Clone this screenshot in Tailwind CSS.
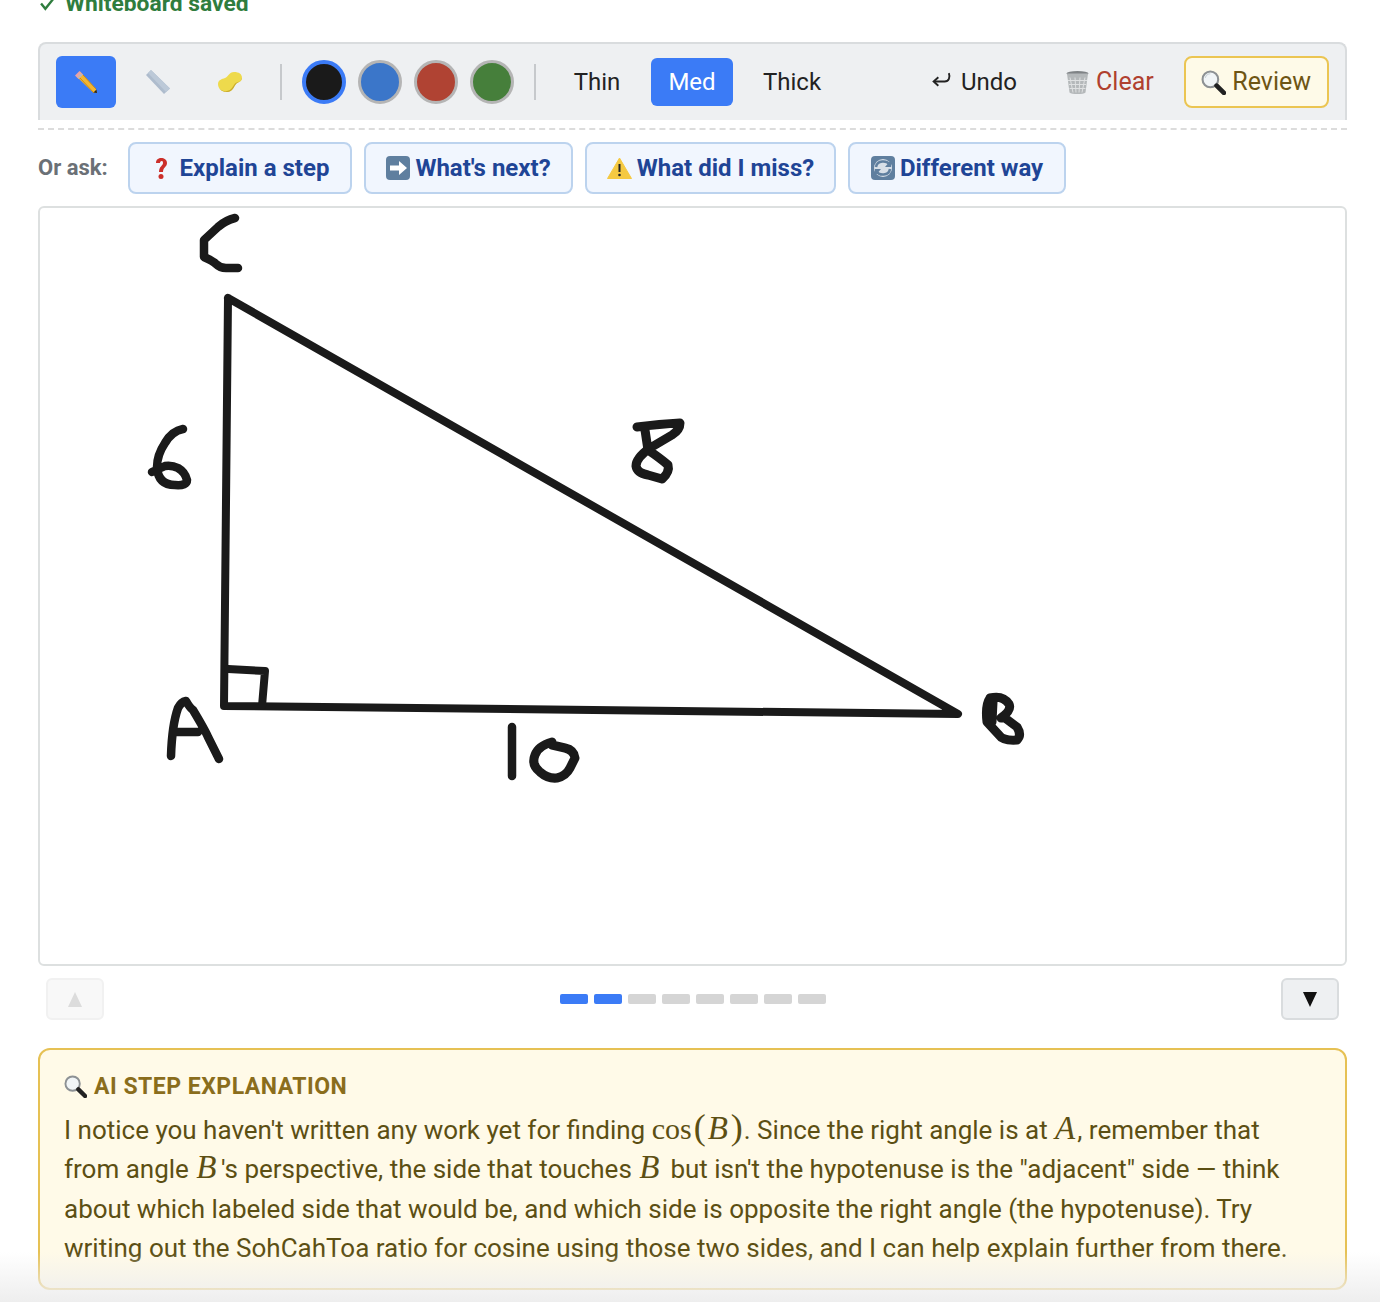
<!DOCTYPE html>
<html lang="en">
<head>
<meta charset="utf-8">
<title>Whiteboard</title>
<script src="https://cdn.jsdelivr.net/npm/@tailwindcss/browser@4"></script>
</head>
<body class="bg-white font-['Roboto',sans-serif] overflow-hidden">
<div class="relative w-[1380px] h-[1302px] overflow-hidden px-[38px]">
  <div class="h-[42px] flex items-start">
    <div class="flex items-center gap-[10px] -mt-[8px] h-[24px] pl-[2px] text-[#2f7d3e] text-[22.800px] font-bold leading-none">
      <svg width="15" height="13" viewBox="0 0 14 12" fill="none" stroke="#2f7d3e" stroke-width="2.200"><path d="M1 5l4 5 8-10"/></svg>
      <span>Whiteboard saved</span>
    </div>
  </div>

  <div class="w-[1309px] h-[78px] bg-[#eef0f2] border-2 border-b-0 border-[#d9dcde] rounded-t-[8px] flex items-center pl-[16px] pr-[16px] text-[24px] text-[#222]">
    <button class="w-[60px] h-[52px] rounded-[6px] bg-[#3b7bf6] flex items-center justify-center">
      <svg width="24" height="24" viewBox="0 0 24 24"><path d="M2 6l4-4.500 16 17.500 1 4-4.500-1z" fill="#f2b632"/><path d="M6 8l14 15M9 5l13 14" stroke="#c98a1c" stroke-width="1"/><path d="M1 5.500L5.500 1l3.500 3.500-4.500 4.500z" fill="#e8a2a6"/><path d="M3.500 7L7 3.500l1.500 1.500L5 8.500z" fill="#b9b9b9"/><path d="M19.500 22.500l3-3 .5 3.500z" fill="#222"/></svg>
    </button>
    <button class="ml-[12px] w-[60px] h-[52px] flex items-center justify-center">
      <svg width="26" height="26" viewBox="0 0 26 26"><path d="M6 1L1 6l18 19 6-5.500z" fill="#aebccd"/><path d="M6 1L3 4l18 19 4-3.500z" fill="#bcc9d8"/></svg>
    </button>
    <button class="ml-[12px] w-[60px] h-[52px] flex items-center justify-center">
      <svg width="26" height="22" viewBox="0 0 26 22"><path d="M1 13c0-4 4-5 7-6s4-6 9-6 8 2 8 6-4 4-6 6-3 8-9 8-9-4-9-8z" fill="#eeda4c"/><path d="M2 17c3 4 9 4 12 1s3-6 7-7 3-3 4-4c0 3-4 4-6 6s-3 8-9 8c-4 0-7-2-8-4z" fill="#c9ab2e"/></svg>
    </button>
    <div class="ml-[20px] w-[2px] h-[36px] bg-[#c6c9cc]"></div>
    <div class="ml-[20px] flex gap-[12px]">
      <div class="w-[44px] h-[44px] rounded-full bg-[#1a1a1a] border-[4px] border-[#3b7bf6]"></div>
      <div class="w-[44px] h-[44px] rounded-full bg-[#3b76c9] border-[3px] border-[#b5b5b5]"></div>
      <div class="w-[44px] h-[44px] rounded-full bg-[#b04333] border-[3px] border-[#b5b5b5]"></div>
      <div class="w-[44px] h-[44px] rounded-full bg-[#467f3b] border-[3px] border-[#b5b5b5]"></div>
    </div>
    <div class="ml-[20px] w-[2px] h-[36px] bg-[#c6c9cc]"></div>
    <button class="ml-[20px] w-[82px] h-[48px] flex items-center justify-center">Thin</button>
    <button class="ml-[13px] w-[82px] h-[48px] rounded-[6px] bg-[#3b7bf6] text-white flex items-center justify-center">Med</button>
    <button class="ml-[14px] w-[90px] h-[48px] flex items-center justify-center">Thick</button>
    <button class="ml-[94px] flex items-center gap-[9px]">
      <svg width="21" height="20" viewBox="0 0 20 19" fill="none" stroke="#222" stroke-width="1.800"><path d="M17 1c1.500 4 0 8-4 8H3"/><path d="M7 5L2.500 9 7 13"/></svg>
      <span>Undo</span>
    </button>
    <button class="ml-[49px] text-[25px] flex items-center gap-[7px] text-[#b0402f]">
      <svg width="23" height="25" viewBox="0 0 23 24"><ellipse cx="11.500" cy="3" rx="11" ry="2.500" fill="#7f8386"/><path d="M1 3h21l-2.500 19c-2 2-14 2-16 0z" fill="#b4b8ba"/><path d="M4 7l3 15M9 7l1 15M14 7l-1 15M19 7l-3 15M2 10h19M3 14h17M3.500 18h16" stroke="#dfe1e2" stroke-width="1"/></svg>
      <span>Clear</span>
    </button>
    <button class="ml-[30px] w-[145px] h-[52px] text-[25px] rounded-[8px] bg-[#fefae8] border-2 border-[#ebc552] text-[#6e5514] flex items-center justify-center gap-[6px]">
      <svg width="25" height="25" viewBox="0 0 24 24"><circle cx="9" cy="9" r="7.500" fill="#f1f5f7" stroke="#8d9194" stroke-width="2"/><path d="M9 3.500a5.500 5.500 0 0 0-5 4" fill="none" stroke="#c9d1d6"/><path d="M15 15L22 22" stroke="#222" stroke-width="4.500" stroke-linecap="round"/></svg>
      <span>Review</span>
    </button>
  </div>

  <div class="mt-[8px] w-[1309px] border-t-2 border-dashed border-[#dcdcdc]"></div>

  <div class="mt-[12px] flex items-center h-[52px] text-[#1f4596] text-[24px] font-bold">
    <span class="w-[90px] pb-[2px] text-[22px] font-bold text-[#6b7076]">Or ask:</span>
    <button class="w-[224px] h-[52px] pl-[3px] rounded-[8px] bg-[#f1f6fe] border-2 border-[#bcd3ee] flex items-center justify-center gap-[12px]">
      <svg width="14" height="24" viewBox="0 0 14 24"><path d="M2 7c0-7 11-6 11 0 0 4-4 4-4 9H5c0-6 4-6 4-9 0-3-3-2-3 0z" fill="#cc2f2a"/><circle cx="7" cy="20.500" r="2.500" fill="#cc2f2a"/></svg>
      <span>Explain a step</span>
    </button>
    <button class="ml-[12px] w-[209px] h-[52px] rounded-[8px] bg-[#f1f6fe] border-2 border-[#bcd3ee] flex items-center justify-center gap-[5px]">
      <svg width="24" height="24" viewBox="0 0 24 24"><rect width="24" height="24" rx="4" fill="#5f7f9f"/><path d="M4 9.500h9V5l8 7-8 7v-4.500H4z" fill="#fff"/></svg>
      <span>What's next?</span>
    </button>
    <button class="ml-[12px] w-[251px] h-[52px] rounded-[8px] bg-[#f1f6fe] border-2 border-[#bcd3ee] flex items-center justify-center gap-[5px]">
      <svg width="25" height="22" viewBox="0 0 25 22"><path d="M12.500 1L24.500 21.500H.5z" fill="#f5c942" stroke="#f5c942" stroke-linejoin="round"/><path d="M12.500 7v8" stroke="#222" stroke-width="2"/><circle cx="12.500" cy="18" r="1.300" fill="#222"/></svg>
      <span>What did I miss?</span>
    </button>
    <button class="ml-[12px] w-[218px] h-[52px] rounded-[8px] bg-[#f1f6fe] border-2 border-[#bcd3ee] flex items-center justify-center gap-[5px]">
      <svg width="24" height="24" viewBox="0 0 24 24"><rect width="24" height="24" rx="4" fill="#5f7f9f"/><circle cx="12" cy="12" r="9" fill="#d8e0e8"/><path d="M5 11c1-7 11-7 14-2M19 13c-1 7-11 7-14 2" fill="none" stroke="#5f7f9f" stroke-width="2.500"/><path d="M20 4v7h-6zM4 20v-7h6z" fill="#5f7f9f"/></svg>
      <span>Different way</span>
    </button>
  </div>

  <div class="mt-[12px] w-[1309px] h-[760px] border-2 border-[#dde0e0] rounded-[6px] bg-white overflow-hidden">
    <svg width="1305" height="756" viewBox="40 208 1305 756" fill="none" stroke="#1a1a1a" stroke-width="8.500" stroke-linecap="round" stroke-linejoin="round">
      <path d="M235 218Q226 220 218 227L204 240L204 257Q213 261 216 264Q220 268 226 268L238 268"/>
      <path d="M228 298L958 714L224 706L228 298" stroke-width="8"/>
      <path d="M228 669L265 671L262 706" stroke-width="8"/>
      <path d="M183 429Q172 431 165 443Q157 455 157 467Q158 485 175 485Q187 486 187 480Q185 472 178 468Q172 465 165 466L152 472"/>
      <path d="M637 427Q660 424 680 423Q680 430 672 435L650 448Q636 458 636 466Q637 473 648 475L662 479Q670 472 668 465Q660 458 648 450L645 430" stroke-width="9"/>
      <path d="M171 756Q172 725 178 708Q181 702 186 701Q190 708 193 710Q205 730 208 737L219 759M173 732L198 732"/>
      <path d="M512 727L512 776"/>
      <path d="M552 742Q538 746 535 755Q531 765 540 772Q548 779 557 778Q566 776 570 768L575 758Q574 750 565 748L552 745" stroke-width="9"/>
      <path d="M990 698Q985 705 987 722L999 735Q1003 741 1017 740Q1022 735 1017 727L1005 718L1001 718Q1012 710 1009 704Q1003 695 990 698M993 702L992 722" stroke-width="9"/>
    </svg>
  </div>

  <div class="mt-[12px] h-[42px] flex items-center justify-between pl-[8px] pr-[8px] w-[1309px]">
    <button class="w-[58px] h-[42px] rounded-[6px] bg-[#f8f8f8] border-2 border-[#f1f1f1] flex items-center justify-center">
      <svg width="16" height="16" viewBox="0 0 16 16"><path d="M8 1l7 15H1z" fill="#dcdcdc"/></svg>
    </button>
    <div class="flex gap-[6px]">
      <div class="w-[28px] h-[10px] rounded-[2px] bg-[#3b7bf6]"></div>
      <div class="w-[28px] h-[10px] rounded-[2px] bg-[#3b7bf6]"></div>
      <div class="w-[28px] h-[10px] rounded-[2px] bg-[#d5d5d5]"></div>
      <div class="w-[28px] h-[10px] rounded-[2px] bg-[#d5d5d5]"></div>
      <div class="w-[28px] h-[10px] rounded-[2px] bg-[#d5d5d5]"></div>
      <div class="w-[28px] h-[10px] rounded-[2px] bg-[#d5d5d5]"></div>
      <div class="w-[28px] h-[10px] rounded-[2px] bg-[#d5d5d5]"></div>
      <div class="w-[28px] h-[10px] rounded-[2px] bg-[#d5d5d5]"></div>
    </div>
    <button class="w-[58px] h-[42px] rounded-[6px] bg-[#eef0f2] border-2 border-[#d9dcde] flex items-center justify-center">
      <svg width="16" height="16" viewBox="0 0 16 16"><path d="M1 1h14L8 16z" fill="#111"/></svg>
    </button>
  </div>

  <div class="mt-[28px] w-[1309px] h-[242px] rounded-[12px] bg-[#fffae8] border-2 border-[#e6c154] pl-[24px] pt-[22px]">
    <div class="flex items-center gap-[7px] h-[28px] text-[#8a6d1c] text-[23px] font-bold tracking-[0.5px] leading-none">
      <svg width="23" height="23" viewBox="0 0 24 24"><circle cx="9" cy="9" r="7.500" fill="#f1f5f7" stroke="#8d9194" stroke-width="2"/><path d="M15 15L22 22" stroke="#222" stroke-width="4.500" stroke-linecap="round"/></svg>
      <span>AI STEP EXPLANATION</span>
    </div>
    <p class="mt-[11px] text-[26px] leading-[39.300px] text-[#5c4f13] whitespace-nowrap">I notice you haven't written any work yet for finding <span class="font-['Liberation_Serif',serif] text-[30px] leading-[0]">cos<span class="ml-[2px] text-[36px] leading-[0]">(</span><i class="pl-[2px] pr-[3px] text-[33px] leading-[0]">B</i><span class="mr-[1px] text-[36px] leading-[0]">)</span></span>. Since the right angle is at <i class="pl-[1px] pr-[2px] font-['Liberation_Serif',serif] text-[33px] leading-[0]">A</i>, remember that<br>from angle <i class="pl-[1px] pr-[4.500px] font-['Liberation_Serif',serif] text-[33px] leading-[0]">B</i>'s perspective, the side that touches <i class="pl-[1px] pr-[4.500px] font-['Liberation_Serif',serif] text-[33px] leading-[0]">B</i> but isn't the hypotenuse is the "adjacent" side — think<br>about which labeled side that would be, and which side is opposite the right angle (the hypotenuse). Try<br>writing out the SohCahToa ratio for cosine using those two sides, and I can help explain further from there.</p>
  </div>

  <div class="absolute left-0 right-0 bottom-0 h-[50px] bg-gradient-to-b from-transparent to-[#eeeeee] pointer-events-none"></div>
</div>
</body>
</html>
